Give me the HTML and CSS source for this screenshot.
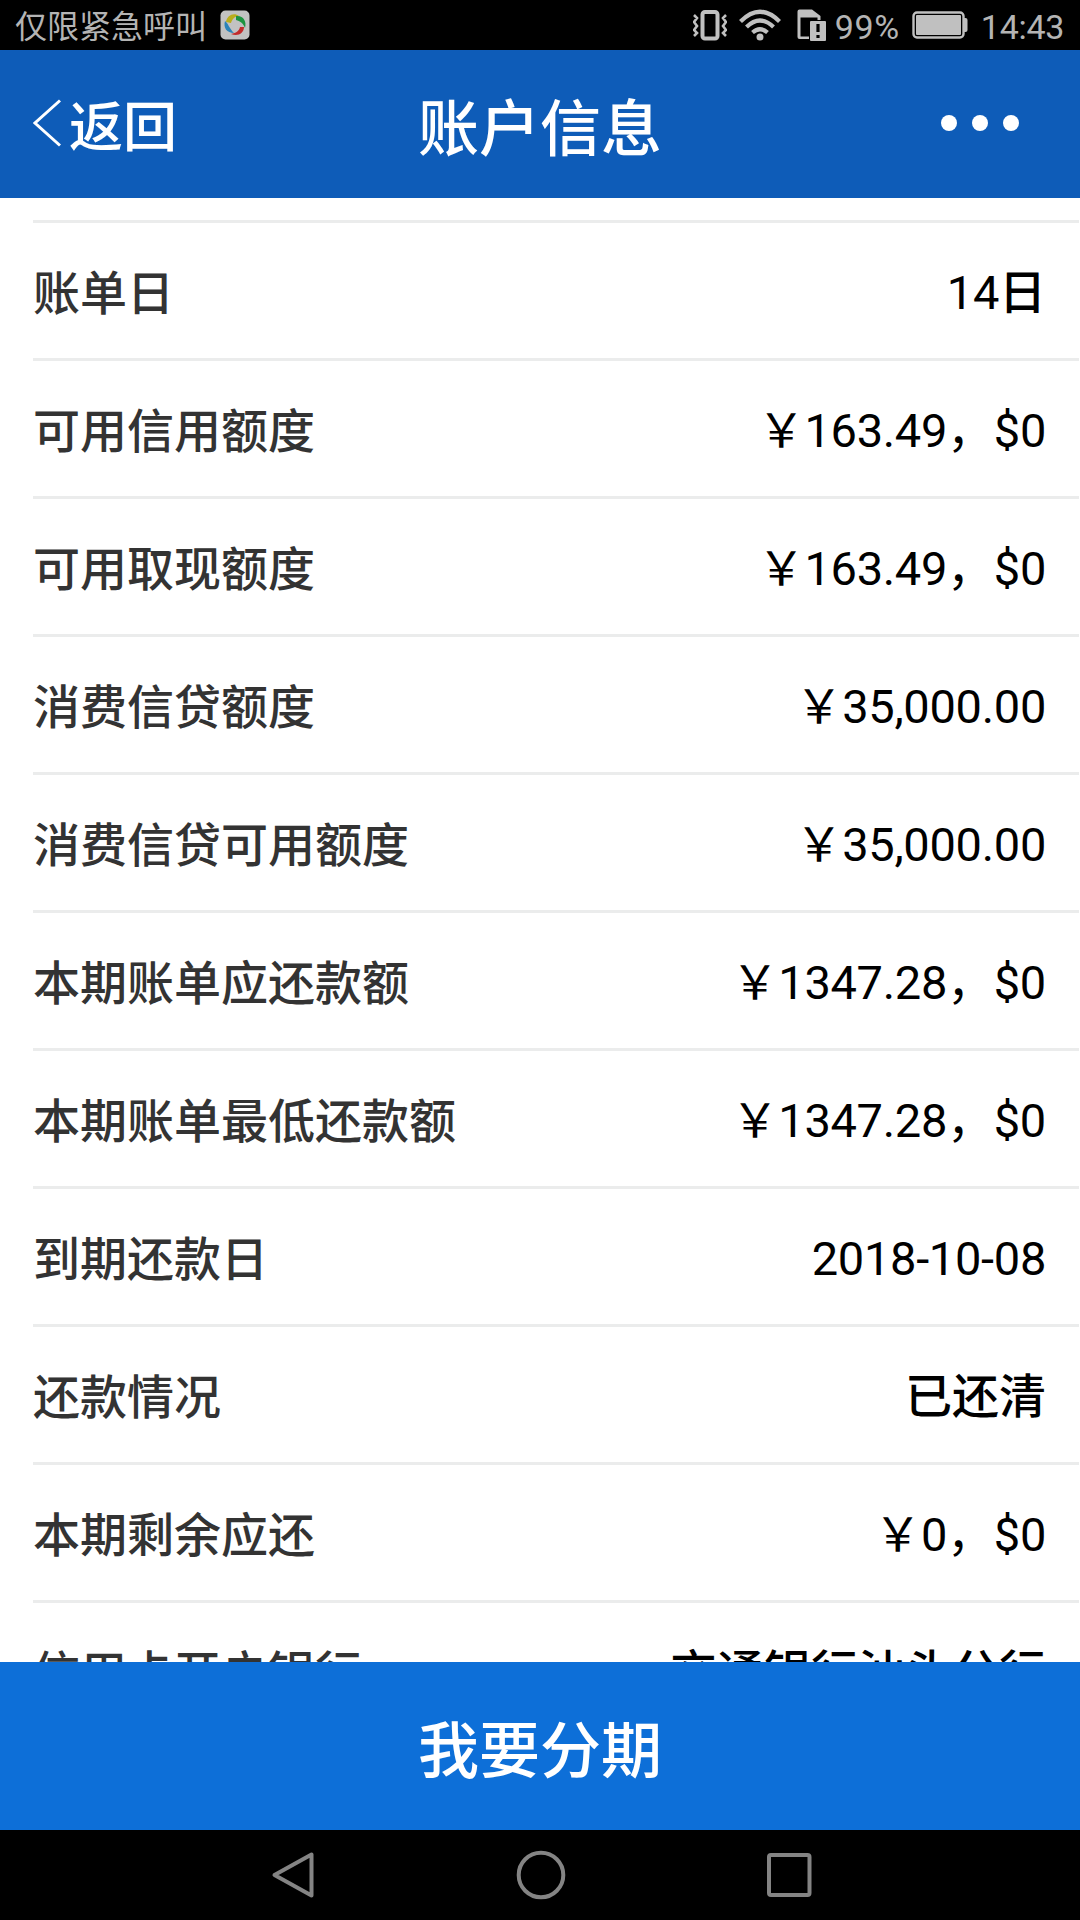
FILE: index.html
```html
<!DOCTYPE html>
<html lang="zh-CN">
<head>
  <meta charset="UTF-8">
  <meta name="viewport" content="width=device-width, initial-scale=1.0">
  <title>账户信息</title>
  <link rel="stylesheet" href="styles.css">
</head>
<body>
  <div class="statusbar">
    <span class="carrier">仅限紧急呼叫</span>
    <svg class="app-icon" width="30" height="30" viewBox="0 0 30 30">
      <rect x="0.5" y="0.5" width="29" height="29" rx="5" fill="#c2c2c2"/>
      <path d="M6 12C7 5 14 2 19 6C14 6 12 10 11 13Z" fill="#b9ad1c"/>
      <path d="M16 6C23 5 27 11 25 18C23 13 20 11 16 10Z" fill="#1c9440"/>
      <path d="M24 17C24 23 18 27 11 24C16 23 19 21 20 17Z" fill="#c22b2b"/>
      <path d="M14 23C7 23 3 18 5 11C8 13 9 18 14 23Z" fill="#2b83b9"/>
    </svg>
    <div class="status-right">
      <svg class="vibrate" width="34" height="32" viewBox="0 0 34 32" fill="none" stroke="#c0c0c0">
        <rect x="9.500" y="3" width="15" height="26.500" rx="2.500" stroke-width="4"/>
        <path d="M1 6l3 3-3 4 3 4-3 4 3 3-3 3M33 6l-3 3 3 4-3 4 3 4-3 3 3 3" stroke-width="2.600"/>
      </svg>
      <svg class="wifi" width="42" height="32" viewBox="0 0 42 32" fill="none" stroke="#c0c0c0" stroke-width="4.200">
        <path d="M1.500 12.500Q21 -7 40.500 12.500M7.500 18Q21 5 34.500 18M13.500 23.500Q21 17 28.500 23.500"/>
        <circle cx="21" cy="28" r="3.500" fill="#c0c0c0" stroke="none"/>
      </svg>
      <svg class="sim" width="30" height="33" viewBox="0 0 30 33">
        <path d="M2.500 0.500H15L23.500 7V11H20.500V8.500H3.500V27.500H12V30H2.500Q0.500 30 0.500 28V2.500Q0.500 0.500 2.500 0.500Z" fill="#c0c0c0"/>
        <rect x="13" y="12" width="16" height="20" rx="1" fill="#c0c0c0"/>
        <path d="M21 15v8M21 26v3" stroke="#000" stroke-width="3.200"/>
      </svg>
      <span class="percent">99%</span>
      <svg class="battery" width="57" height="28" viewBox="0 0 57 28">
        <rect x="1.500" y="1.500" width="50" height="25" rx="3.500" fill="none" stroke="#c0c0c0" stroke-width="2.400"/>
        <rect x="4" y="4" width="45" height="20" rx="1" fill="#c0c0c0"/>
        <path d="M52 7h1.500q2 0 2 2v10q0 2-2 2H52z" fill="#c0c0c0"/>
      </svg>
      <span class="time">14:43</span>
    </div>
  </div>

  <header class="header">
    <div class="back">
      <svg width="28" height="48" viewBox="0 0 28 48">
        <path d="M27 1.500L2 24L27 46.500" fill="none" stroke="#fff" stroke-width="3"/>
      </svg>
      <span>返回</span>
    </div>
    <h1 class="title">账户信息</h1>
    <div class="more"><i></i><i></i><i></i></div>
  </header>

  <main class="list">
    <div class="row"><span class="label">账单日</span><span class="value">14<b>日</b></span></div>
    <div class="row"><span class="label">可用信用额度</span><span class="value">￥163.49，$0</span></div>
    <div class="row"><span class="label">可用取现额度</span><span class="value">￥163.49，$0</span></div>
    <div class="row"><span class="label">消费信贷额度</span><span class="value">￥35,000.00</span></div>
    <div class="row"><span class="label">消费信贷可用额度</span><span class="value">￥35,000.00</span></div>
    <div class="row"><span class="label">本期账单应还款额</span><span class="value">￥1347.28，$0</span></div>
    <div class="row"><span class="label">本期账单最低还款额</span><span class="value">￥1347.28，$0</span></div>
    <div class="row"><span class="label">到期还款日</span><span class="value">2018-10-08</span></div>
    <div class="row"><span class="label">还款情况</span><span class="value"><b>已还清</b></span></div>
    <div class="row"><span class="label">本期剩余应还</span><span class="value">￥0，$0</span></div>
    <div class="row"><span class="label">信用卡开户银行</span><span class="value"><b>交通银行汕头分行</b></span></div>
  </main>

  <button class="submit">我要分期</button>

  <nav class="navbar">
    <svg width="44" height="48" viewBox="0 0 44 48">
      <path d="M40.500 3.500V44.500L3.500 24Z"/>
    </svg>
    <svg width="50" height="50" viewBox="0 0 50 50">
      <circle cx="25" cy="25" r="22.300"/>
    </svg>
    <svg width="46" height="46" viewBox="0 0 46 46">
      <rect x="3" y="3" width="40.500" height="40" rx="2"/>
    </svg>
  </nav>
</body>
</html>
```
FILE: styles.css
```css
* {
  box-sizing: border-box;
}

body {
  margin: 0;
  width: 1080px;
  height: 1920px;
  display: flex;
  flex-direction: column;
  overflow: hidden;
  background: #fff;
  font-family: Roboto, "Noto Sans CJK SC", sans-serif;
}

/* status bar */
.statusbar {
  height: 50px;
  flex: none;
  display: flex;
  align-items: center;
  padding: 0 16px 0 15px;
  background: #000;
  color: #b4b4b4;
  font-size: 32px;
  line-height: 46px;
}

.carrier {
  padding-top: 4px;
}

.app-icon {
  margin-left: 13px;
}

.status-right {
  margin-left: auto;
  display: flex;
  align-items: center;
}

.wifi {
  margin-left: 12px;
}

.sim {
  margin-left: 16px;
}

.percent {
  width: 67px;
  margin-left: 8px;
  padding-top: 3px;
  font-size: 34px;
  letter-spacing: 0.6px;
}

.battery {
  margin-left: 10px;
}

.time {
  margin-left: 12px;
  padding-top: 3px;
  font-size: 34px;
  letter-spacing: -0.3px;
}

/* title bar */
.header {
  height: 148px;
  flex: none;
  display: grid;
  grid-template-columns: 1fr auto 1fr;
  align-items: center;
  padding: 0 33px 2px;
  background: #0e5cb8;
  color: #fff;
}

.back {
  display: flex;
  align-items: center;
  gap: 8px;
  font-size: 54px;
  font-weight: 500;
}

.title {
  margin: 0;
  padding-top: 2px;
  font-size: 61px;
  font-weight: 500;
}

.more {
  display: flex;
  justify-content: flex-end;
  gap: 15px;
  padding-right: 28px;
}

.more i {
  width: 16px;
  height: 16px;
  border-radius: 50%;
  background: #fff;
}

/* account rows */
.list {
  flex: 1;
  min-height: 0;
  overflow: hidden;
  padding: 22px 1px 0 33px;
}

.row {
  height: 138px;
  display: flex;
  justify-content: space-between;
  align-items: center;
  padding-right: 33px;
  border-top: 3px solid #ebecec;
  font-size: 47px;
  line-height: 70px;
}

.label {
  padding-top: 6px;
  color: #333;
  font-weight: 500;
}

.value {
  padding-top: 4px;
  color: #000;
  letter-spacing: -0.3px;
}

.value b {
  font-weight: 500;
  letter-spacing: 0;
}

.submit {
  height: 168px;
  flex: none;
  border: none;
  padding: 0;
  background: #0d6fd8;
  color: #fff;
  font-family: inherit;
  font-size: 61px;
  font-weight: 500;
}

.navbar {
  height: 90px;
  flex: none;
  display: flex;
  justify-content: space-between;
  align-items: center;
  padding: 0 268px 0 271px;
  background: #000;
}

.navbar svg {
  fill: none;
  stroke: #848484;
  stroke-width: 4;
  stroke-linejoin: round;
}
```
